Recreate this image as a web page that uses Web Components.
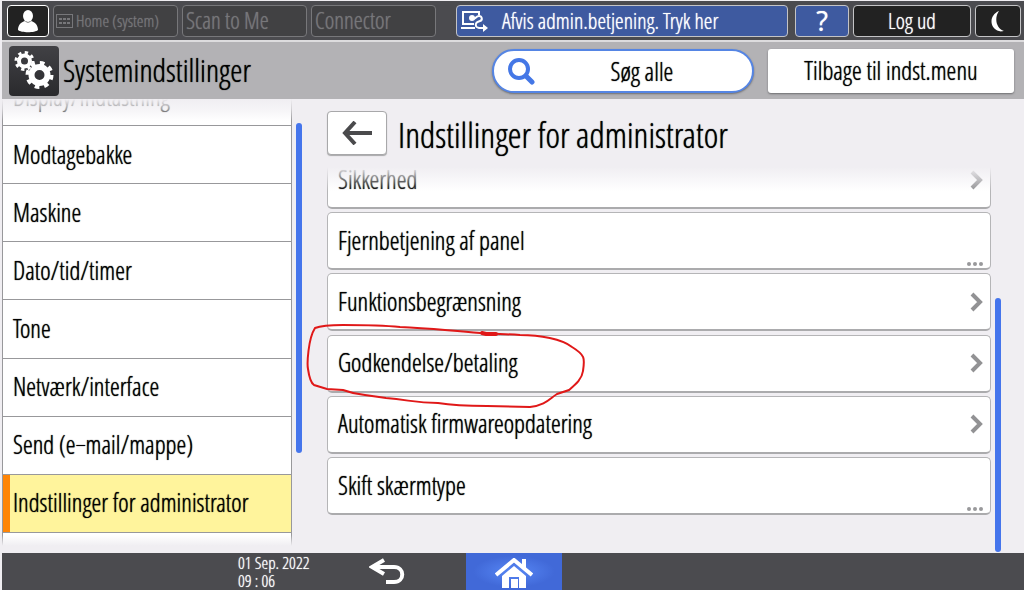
<!DOCTYPE html>
<html lang="da">
<head>
<meta charset="utf-8">
<meta name="viewport" content="width=device-width, initial-scale=1">
<title>Systemindstillinger</title>
<style>
    body {
        margin: 0;
        background-color: #F0EEF2;
        color: #000;
        font-family: "Open Sans Condensed Light", "Roboto Condensed", "Liberation Sans", sans-serif;
        text-shadow: 0 0 1px currentColor;
    }
</style>
</head>
<body>
<device-panel>
    <status-bar slot="status"></status-bar>
    <page-header slot="header" heading="Systemindstillinger"></page-header>
    <side-menu slot="menu">
        <menu-item class="first" label="Display/Indtastning"></menu-item>
        <menu-item label="Modtagebakke"></menu-item>
        <menu-item label="Maskine"></menu-item>
        <menu-item label="Dato/tid/timer"></menu-item>
        <menu-item label="Tone"></menu-item>
        <menu-item label="Netværk/interface"></menu-item>
        <menu-item label="Send (e−mail/mappe)"></menu-item>
        <menu-item label="Indstillinger for administrator" selected></menu-item>
        <menu-item class="last" label=""></menu-item>
    </side-menu>
    <settings-list slot="main" heading="Indstillinger for administrator">
        <setting-row class="first" label="Sikkerhed" kind="next"></setting-row>
        <setting-row label="Fjernbetjening af panel" kind="more"></setting-row>
        <setting-row label="Funktionsbegrænsning" kind="next"></setting-row>
        <setting-row label="Godkendelse/betaling" kind="next"><ink-mark></ink-mark></setting-row>
        <setting-row label="Automatisk firmwareopdatering" kind="next"></setting-row>
        <setting-row label="Skift skærmtype" kind="more"></setting-row>
    </settings-list>
    <nav-bar slot="nav"></nav-bar>
</device-panel>

<script>
class DevicePanel extends HTMLElement {
    constructor() {
        super();
        this.attachShadow({mode: 'open'}).innerHTML = `
            <style>
                :host {
                    display: flex;
                    flex-direction: column;
                    box-sizing: border-box;
                    min-height: 100vh;
                    padding: 1px 0 0 2px;
                }

                .content {
                    display: flex;
                    flex: 1;
                }
            </style>
            <slot name="status"></slot>
            <slot name="header"></slot>
            <div class="content">
                <slot name="menu"></slot>
                <slot name="main"></slot>
            </div>
            <slot name="nav"></slot>
        `;
    }
}
customElements.define('device-panel', DevicePanel);

class StatusBar extends HTMLElement {
    constructor() {
        super();
        this.attachShadow({mode: 'open'}).innerHTML = `
            <style>
                :host {
                    display: flex;
                    gap: 4px;
                    padding: 4px 3px 3px 5px;
                    background-color: #4B4B4F;
                    border-bottom: 2px solid #DDDCDE;
                }

                button {
                    display: flex;
                    flex: none;
                    align-items: center;
                    justify-content: center;
                    box-sizing: border-box;
                    height: 32px;
                    padding: 0 4px 2px;
                    border: 1px solid #C4C4C6;
                    border-radius: 4px;
                    background-color: #222;
                    color: #FFF;
                    font: inherit;
                    font-size: 23px;
                    line-height: 28px;
                    text-shadow: inherit;
                    white-space: nowrap;
                }

                .user { width: 42px; padding: 0; border-color: #FFF; }

                .tab {
                    width: 125px;
                    justify-content: flex-start;
                    padding-left: 3px;
                    border-color: #77777A;
                    background-color: #414143;
                    color: #77777A;
                }

                .home { font-size: 17px; padding: 0 2px; gap: 3px; }

                .notice {
                    flex: 1;
                    justify-content: flex-start;
                    gap: 14px;
                    margin: 0 3px 0 16px;
                    padding: 0 3px 2px;
                    font-size: 22px;
                }

                .notice svg { padding-top: 2px; }
                .blue { background-color: #3E5AA0; }
                .help { width: 54px; padding: 0; font-family: "Open Sans", sans-serif; font-size: 27px; }
                .logout { width: 118px; font-size: 22px; }
                .sleep { width: 46px; padding: 0; }
                svg { flex: none; }
            </style>
            <button class="user" aria-label="Bruger">
                <svg width="22" height="24" viewBox="0 0 22 24" fill="#FFF">
                    <ellipse cx="11" cy="7" rx="5" ry="6"/>
                    <path d="M1 21c0-5 3-8 7-9 2 2 4 2 6 0 4 1 7 4 7 9-3 3-17 3-20 0z"/>
                </svg>
            </button>
            <button class="tab home" disabled>
                <svg width="17" height="14" viewBox="0 0 17 14" fill="#77777A">
                    <path d="M0 0h17v14H0z M1 1v12h15V1z" fill-rule="evenodd"/>
                    <path d="M3 4h3v2H3zM7 4h3v2H7zM11 4h3v2h-3zM3 8h3v2H3zM7 8h3v2H7zM11 8h3v2h-3z"/>
                </svg>
                Home (system)
            </button>
            <button class="tab" disabled>Scan to Me</button>
            <button class="tab" disabled>Connector</button>
            <button class="notice blue">
                <svg width="28" height="22" viewBox="0 0 28 22" fill="none" stroke="#FFF" stroke-width="2">
                    <path d="M19 5V2H3v12h11M1 18h14"/>
                    <circle cx="12" cy="8" r="2" fill="#FFF"/>
                    <path d="M13 9c3 0 3-3 6-3s4 4 1 5-5 2-4 5 5 2 9 2"/>
                    <path d="M23 14l5 4-5 4z" fill="#FFF" stroke="none"/>
                </svg>
                Afvis admin.betjening. Tryk her
            </button>
            <button class="help blue">?</button>
            <button class="logout">Log ud</button>
            <button class="sleep" aria-label="Dvale">
                <svg width="16" height="22" viewBox="0 0 16 22" fill="#FFF">
                    <path d="M9 1C-1 5-1 18 9 21c2 1 4 0 5 0C6 18 4 8 9 1z"/>
                </svg>
            </button>
        `;
    }
}
customElements.define('status-bar', StatusBar);

class PageHeader extends HTMLElement {
    constructor() {
        super();
        this.attachShadow({mode: 'open'});
    }

    connectedCallback() {
        this.shadowRoot.innerHTML = `
            <style>
                :host {
                    display: flex;
                    align-items: center;
                    box-sizing: border-box;
                    height: 57px;
                    padding: 0 10px 0 7px;
                    background-color: #B3B2B5;
                }

                .logo {
                    flex: none;
                    border-radius: 4px;
                    background: linear-gradient(#414145, #2A2A2D);
                }

                h1 {
                    flex: 1;
                    margin: 0 4px;
                    padding-bottom: 2px;
                    font-size: 31px;
                    font-weight: 400;
                    line-height: 36px;
                }

                button {
                    display: flex;
                    align-items: center;
                    justify-content: center;
                    box-sizing: border-box;
                    height: 44px;
                    padding-bottom: 2px;
                    border: 0;
                    background-color: #FFF;
                    color: #000;
                    font: inherit;
                    font-size: 25px;
                    line-height: 30px;
                    text-shadow: inherit;
                    box-shadow: 0 1px 2px #6D6D70;
                }

                .search {
                    width: 262px;
                    padding: 0 16px 0 14px;
                    border: 2px solid #5585E4;
                    border-radius: 22px;
                }

                .search span { flex: 1; padding-left: 12px; }

                .back {
                    width: 246px;
                    margin-left: 14px;
                    border-radius: 3px;
                }
            </style>
            <svg class="logo" width="50" height="50" viewBox="0 0 50 50" fill="none" stroke="#FFF">
                <circle cx="15.500" cy="15" r="5.500" stroke-width="4"/>
                <circle cx="15.500" cy="15" r="8.500" stroke-width="3" stroke-dasharray="3.300 3.376"/>
                <circle cx="30.500" cy="29" r="8" stroke-width="6"/>
                <circle cx="30.500" cy="29" r="12" stroke-width="4" stroke-dasharray="4.600 4.825"/>
            </svg>
            <h1>${this.getAttribute('heading')}</h1>
            <button class="search">
                <svg width="28" height="28" viewBox="0 0 28 28" fill="none" stroke="#4477E6">
                    <circle cx="11" cy="12" r="9" stroke-width="4"/>
                    <path d="M18 19l6 6" stroke-width="5" stroke-linecap="round"/>
                </svg>
                <span>Søg alle</span>
            </button>
            <button class="back">Tilbage til indst.menu</button>
        `;
    }
}
customElements.define('page-header', PageHeader);

class SideMenu extends HTMLElement {
    constructor() {
        super();
        this.attachShadow({mode: 'open'}).innerHTML = `
            <style>
                :host {
                    display: flex;
                    flex: none;
                    gap: 4px;
                    width: 300px;
                }

                nav {
                    position: relative;
                    display: flex;
                    flex: 1;
                    flex-direction: column;
                    box-sizing: border-box;
                    min-width: 0;
                    border: solid #98989B;
                    border-width: 0 1px;
                    background-color: #FFF;
                }

                /* rows fade out where the list scrolls on */
                nav::before, nav::after {
                    content: "";
                    position: absolute;
                    left: -1px;
                    right: -1px;
                    z-index: 1;
                    height: 22px;
                    background: linear-gradient(#F0EEF2, #F0EEF2AA 45%, #F0EEF200);
                    pointer-events: none;
                }

                nav::before { top: 0; }

                nav::after {
                    bottom: 0;
                    height: 18px;
                    background: linear-gradient(#F0EEF200, #F0EEF2 60%);
                }

                .track { width: 6px; padding: 24px 0 100px; display: flex; }
                .thumb { flex: 1; border-radius: 3px; background-color: #4575EC; }

                ::slotted(*) { flex: 1; }
                ::slotted(.first) { flex: 0 0 27px; }
                ::slotted(.last) { flex: 0 0 20px; border-bottom: 0; }
            </style>
            <nav><slot></slot></nav>
            <div class="track"><div class="thumb"></div></div>
        `;
    }
}
customElements.define('side-menu', SideMenu);

class MenuItem extends HTMLElement {
    constructor() {
        super();
        this.attachShadow({mode: 'open'});
    }

    connectedCallback() {
        this.shadowRoot.innerHTML = `
            <style>
                :host {
                    display: flex;
                    align-items: flex-end;
                    box-sizing: border-box;
                    border-bottom: 1px solid #98989B;
                    overflow: hidden;
                }

                button {
                    flex: 1;
                    height: 57px;
                    padding: 0 10px 2px;
                    border: 0;
                    background-color: #FFF;
                    color: #000;
                    font: inherit;
                    font-size: 25px;
                    line-height: 30px;
                    text-align: left;
                    text-shadow: inherit;
                    white-space: nowrap;
                }

                :host([selected]) button {
                    padding-left: 3px;
                    border-left: 7px solid #FF8506;
                    background-color: #FFF49C;
                }
            </style>
            <button>${this.getAttribute('label')}</button>
        `;
    }
}
customElements.define('menu-item', MenuItem);

class SettingsList extends HTMLElement {
    constructor() {
        super();
        this.attachShadow({mode: 'open'});
    }

    connectedCallback() {
        this.shadowRoot.innerHTML = `
            <style>
                :host {
                    display: flex;
                    flex: 1;
                    gap: 4px;
                    padding: 0 23px 0 25px;
                }

                .column {
                    display: flex;
                    flex: 1;
                    flex-direction: column;
                }

                header {
                    display: flex;
                    align-items: center;
                    gap: 11px;
                    padding: 12px 0;
                }

                header button {
                    display: flex;
                    align-items: center;
                    justify-content: center;
                    width: 60px;
                    height: 44px;
                    padding: 0;
                    border: 1px solid #A8A8AA;
                    border-radius: 4px;
                    background-color: #FFF;
                    box-shadow: 0 1px 1px #A8A8AA;
                }

                h2 {
                    margin: 0;
                    padding-top: 4px;
                    font-size: 35px;
                    font-weight: 400;
                    line-height: 40px;
                }

                .rows {
                    position: relative;
                    display: flex;
                    flex: 1;
                    flex-direction: column;
                    gap: 3px;
                    padding-bottom: 38px;
                }

                .rows::before {
                    content: "";
                    position: absolute;
                    top: 0;
                    left: 0;
                    right: 0;
                    z-index: 1;
                    height: 24px;
                    background: linear-gradient(#F0EEF2, #F0EEF200);
                    pointer-events: none;
                }

                .track { width: 6px; padding: 199px 0 1px; display: flex; }
                .thumb { flex: 1; border-radius: 3px; background-color: #4575EC; }

                ::slotted(*) { flex: 1; }
                ::slotted(.first) { flex: 0 0 42px; overflow: hidden; }
            </style>
            <div class="column">
                <header>
                    <button aria-label="Tilbage">
                        <svg width="30" height="24" viewBox="0 0 30 24" fill="none" stroke="#4A4A4C" stroke-width="4">
                            <path d="M13 1L3 12l10 11M3 12h27"/>
                        </svg>
                    </button>
                    <h2>${this.getAttribute('heading')}</h2>
                </header>
                <div class="rows"><slot></slot></div>
            </div>
            <div class="track"><div class="thumb"></div></div>
        `;
    }
}
customElements.define('settings-list', SettingsList);

class SettingRow extends HTMLElement {
    constructor() {
        super();
        this.attachShadow({mode: 'open'});
    }

    connectedCallback() {
        const next = `
            <svg width="14" height="20" viewBox="0 0 14 20" fill="none" stroke="#929294" stroke-width="4">
                <path d="M2 2l8 8-8 8"/>
            </svg>`;
        const more = `
            <svg class="more" width="18" height="5" viewBox="0 0 18 5" fill="#99999B">
                <circle cx="3" cy="3" r="2"/><circle cx="9" cy="3" r="2"/><circle cx="15" cy="3" r="2"/>
            </svg>`;
        this.shadowRoot.innerHTML = `
            <style>
                :host {
                    position: relative;
                    display: flex;
                    align-items: flex-end;
                }

                button {
                    display: flex;
                    flex: 1;
                    align-items: center;
                    justify-content: space-between;
                    box-sizing: border-box;
                    height: 58px;
                    padding: 0 6px 0 10px;
                    border: 1px solid #B5B5B7;
                    border-bottom: 2px solid #ABABAD;
                    border-radius: 5px;
                    background-color: #FFF;
                    color: #000;
                    font: inherit;
                    font-size: 25px;
                    line-height: 30px;
                    text-shadow: inherit;
                }

                span { padding-bottom: 2px; }
                .more { align-self: flex-end; padding-bottom: 2px; }
            </style>
            <button><span>${this.getAttribute('label')}</span>${this.getAttribute('kind') === 'next' ? next : more}</button>
            <slot></slot>
        `;
    }
}
customElements.define('setting-row', SettingRow);

// Hand-drawn ring laid over the row it belongs to
class InkMark extends HTMLElement {
    constructor() {
        super();
        this.attachShadow({mode: 'open'}).innerHTML = `
            <style>
                :host {
                    position: absolute;
                    top: -15px;
                    left: -27px;
                    z-index: 2;
                    pointer-events: none;
                }

                svg { display: block; }
            </style>
            <svg width="300" height="100" viewBox="0 0 300 100" fill="none" stroke="#E01818" stroke-width="2" stroke-linecap="round">
                <path d="M180 14C150 12 130 9 100 8 80 6 55 6 43 6 30 6 20 7 15 9 8 20 7 45 8 50 9 57 11 64 14 66L27 70 43 71C51 74 55 75 65 76L86 79C110 81 115 84 138 84 150 86 165 87 187 87L230 88C246 86 249 80 257 75L269 71C276 65 282 60 283 52 285 39 285 36 272 28 262 20 240 16 220 16 205 15 195 15 180 14"/>
                <path d="M182 14l4 1 10 0" stroke-width="4"/>
            </svg>
        `;
    }
}
customElements.define('ink-mark', InkMark);

class NavBar extends HTMLElement {
    constructor() {
        super();
        this.attachShadow({mode: 'open'}).innerHTML = `
            <style>
                :host {
                    display: grid;
                    grid-template-columns: 343px 121px 96px;
                    box-sizing: border-box;
                    height: 37px;
                    background-color: #4B4B4F;
                }

                time {
                    padding: 1px 0 0 236px;
                    color: #FFF;
                    font-size: 17px;
                    line-height: 18px;
                    white-space: nowrap;
                }

                button {
                    display: flex;
                    justify-content: center;
                    padding: 5px 0 0;
                    border: 0;
                    background: none;
                }

                .return { justify-content: flex-start; padding-left: 24px; }
                .home { background: radial-gradient(#5787F5, #4169D8 60%); }
            </style>
            <time datetime="2022-09-01T09:06">01 Sep. 2022<br>09 : 06</time>
            <button class="return" aria-label="Retur">
                <svg width="36" height="28" viewBox="0 0 36 28" fill="none" stroke="#FFF" stroke-width="4">
                    <path d="M15 2L3 9l12 7"/>
                    <path d="M3 9h22c11 0 11 15 0 15h-8"/>
                </svg>
            </button>
            <button class="home" aria-label="Hjem">
                <svg width="38" height="31" viewBox="0 0 38 31">
                    <path d="M1 17L19 2l18 15" fill="none" stroke="#FFF" stroke-width="4"/>
                    <path d="M27 1h4v10l-4-3zM7 18L19 8l12 10v12h-7V19H14v11H7zM16 21h7v9h-7z" fill="#FFF"/>
                </svg>
            </button>
        `;
    }
}
customElements.define('nav-bar', NavBar);
</script>
</body>
</html>
